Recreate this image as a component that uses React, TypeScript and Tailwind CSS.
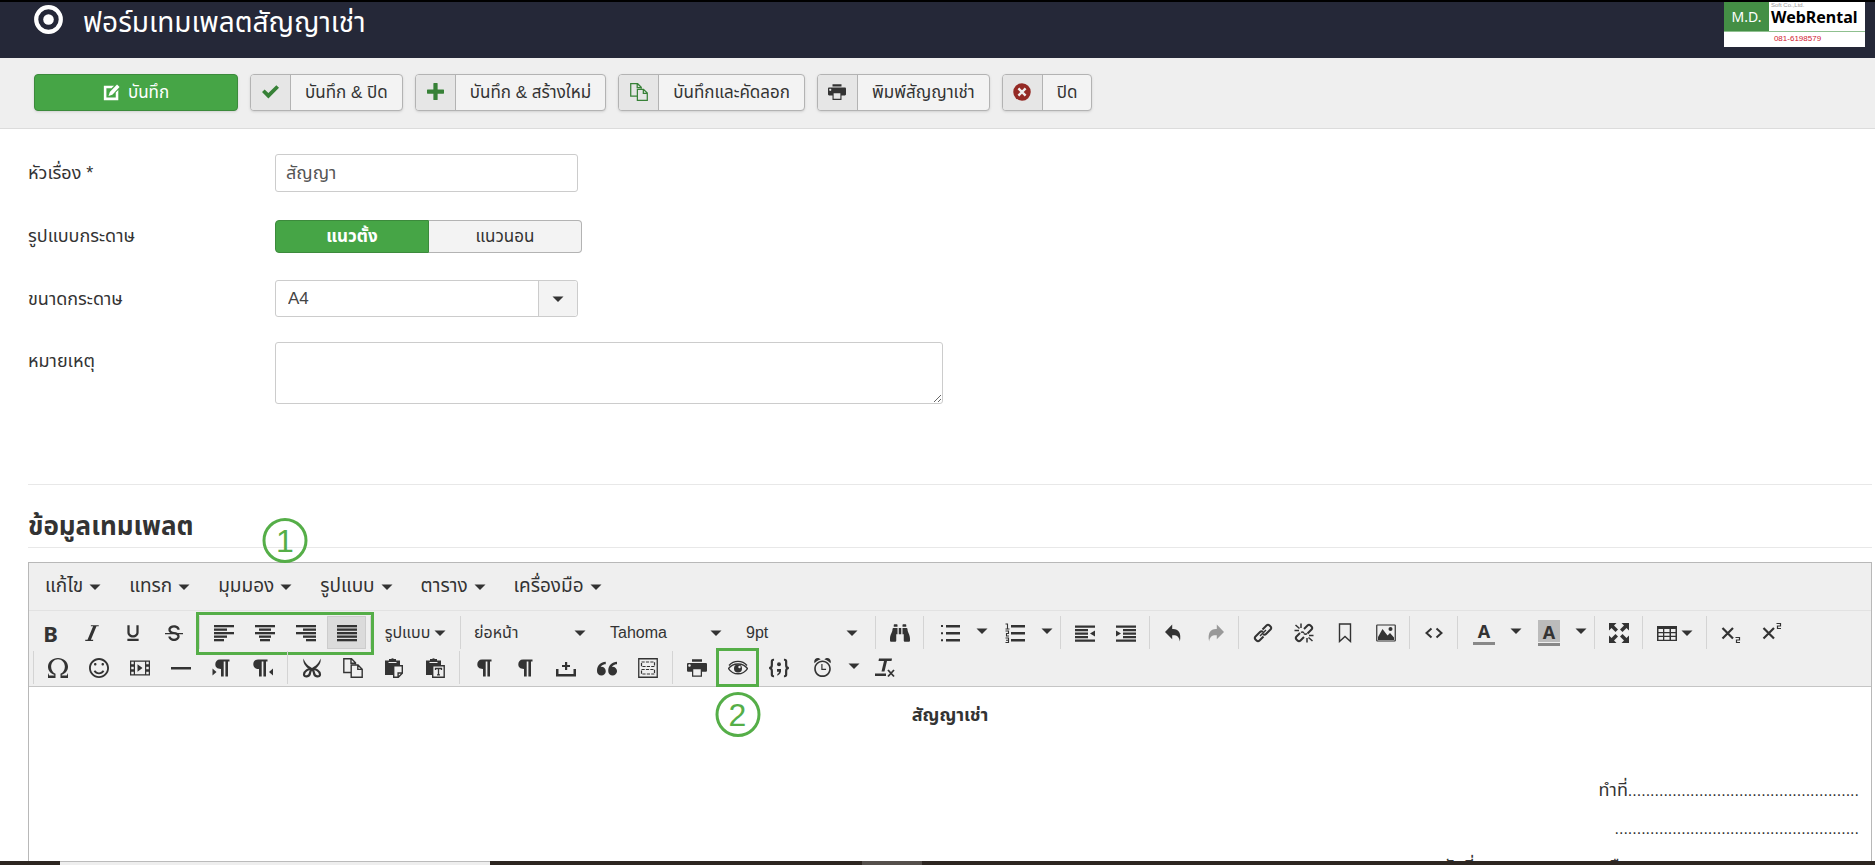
import type { ComponentProps, ReactNode } from 'react';
import {
  ImCheckmark,
  ImPlus,
  ImPrinter,
  ImItalic,
  ImUnderline,
  ImStrikethrough,
  ImOmega,
  ImSmile,
  ImFilm,
  ImQuotesLeft,
  ImAlarm,
} from 'react-icons/im';
import { FaBinoculars } from 'react-icons/fa';

const menus = ['แก้ไข', 'แทรก', 'มุมมอง', 'รูปแบบ', 'ตาราง', 'เครื่องมือ'];

const Svg = ({ children, className = 'size-5' }: { children: ReactNode; className?: string }) => (
  <svg viewBox="0 0 20 20" className={className} fill="currentColor" aria-hidden="true">
    {children}
  </svg>
);

const Caret = () => (
  <svg viewBox="0 0 12 6" className="w-3 h-1.5 shrink-0" fill="currentColor" aria-hidden="true">
    <path d="M0.500 0.500h11L6 6z" />
  </svg>
);

// Five horizontal strokes, given as [x, width] from top to bottom
const Lines = ({ rows }: { rows: number[][] }) => (
  <Svg>
    {rows.map(([x, w], i) => (
      <rect key={i} x={x} y={2 + i * 3.5} width={w} height="2.300" />
    ))}
  </Svg>
);

const alignments = [
  { label: 'ชิดซ้าย', rows: [[0, 20], [0, 13], [0, 20], [0, 13], [0, 10]] },
  { label: 'กึ่งกลาง', rows: [[0, 20], [4, 12], [0, 20], [4, 12], [5, 10]] },
  { label: 'ชิดขวา', rows: [[0, 20], [7, 13], [0, 20], [7, 13], [10, 10]] },
  { label: 'เต็มแนว', rows: [[0, 20], [0, 20], [0, 20], [0, 20], [0, 20]], active: true },
];

const TargetIcon = () => (
  <svg viewBox="0 0 29 29" className="size-[29px]" aria-hidden="true">
    <circle cx="14.500" cy="14.500" r="12.300" fill="none" stroke="currentColor" strokeWidth="4.200" />
    <circle cx="14.500" cy="14.500" r="5.300" fill="currentColor" />
  </svg>
);

const EditIcon = () => (
  <Svg className="size-[17px]">
    <path d="M1 2h12l-3 3H4v11h11v-6l3-3v12H1z" />
    <path d="M16.500 0.500l3 3-8.500 9-4.500 1.500 1.500-4.500z" />
  </Svg>
);

const CloseIcon = () => (
  <Svg className="size-[18px] text-[#942a25]">
    <circle cx="10" cy="10" r="9.700" />
    <path d="M6 6l8 8M14 6l-8 8" stroke="#efefef" strokeWidth="2.600" />
  </Svg>
);

const CopyIcon = ({ className = 'size-5' }: { className?: string }) => (
  <Svg className={className}>
    <g fill="none" stroke="currentColor" strokeWidth="1.400">
      <path d="M8 14.500H0.800V0.800h7.700l4 4V6.500M8 0.800V5.200h4.500" />
      <path d="M8.200 7h6.800l4.200 4.200v8H8.200zM14.800 7v4.400h4.400" />
    </g>
  </Svg>
);

const BulletIcon = () => (
  <Svg>
    <path d="M6 2h14v2.600H6zM6 9h14v2.600H6zM6 16h14v2.600H6zM1 2h2v2H1zM1 9.200h2v2H1zM1 16.300h2v2H1z" />
  </Svg>
);

const NumberIcon = () => (
  <Svg>
    <path d="M6 2h14v2.600H6zM6 9h14v2.600H6zM6 16h14v2.600H6z" />
    <path
      d="M0.500 1h2v5M0.500 6h4M0.500 8h3v2.500h-2V13H4M0.500 15h3v4.500h-3M1 17.200h2.500"
      fill="none"
      stroke="currentColor"
      strokeWidth="1.100"
    />
  </Svg>
);

const OutdentIcon = () => (
  <Svg>
    <path d="M0 2.500h20v2.200H0zM0 6h13v2.200H0zM0 9.500h13v2.200H0zM0 13h13v2.200H0zM0 16.500h20v2.200H0zM20 7.500v6l-5-3z" />
  </Svg>
);

const IndentIcon = () => (
  <Svg>
    <path d="M0 2.500h20v2.200H0zM7 6h13v2.200H7zM7 9.500h13v2.200H7zM7 13h13v2.200H7zM0 16.500h20v2.200H0zM0 7.500v6l5-3z" />
  </Svg>
);

const UndoIcon = () => (
  <Svg className="size-[18px]">
    <path d="M8 0.500v5C14.500 5 18.500 9 16.500 19.500 16 14 13 12 8 12.500V17L0 8.800z" />
  </Svg>
);

const RedoIcon = () => (
  <Svg className="size-[18px] text-[#999]">
    <path d="M12 0.500v5C5.500 5 1.500 9 3.500 19.500 4 14 7 12 12 12.500V17l8-8.200z" />
  </Svg>
);

const LinkIcon = () => (
  <Svg>
    <g fill="none" stroke="currentColor" strokeWidth="2" strokeLinejoin="round">
      <path d="M9.500 6.500l4-4q1.500-1.500 3 0l1 1q1.500 1.500 0 3l-4.500 4.500q-1.500 1.500-3 0" />
      <path d="M10.500 13.500l-4 4q-1.500 1.500-3 0l-1-1q-1.500-1.500 0-3L7 9q1.500-1.500 3 0" />
      <path d="M7 13l6-6" strokeWidth="1.500" />
    </g>
  </Svg>
);

const UnlinkIcon = () => (
  <Svg>
    <g fill="none" stroke="currentColor" strokeWidth="2" strokeLinejoin="round">
      <path d="M10 6l3.500-3.500q1.500-1.500 3 0l1 1q1.500 1.500 0 3l-4 4M10 14l-3.500 3.500q-1.500 1.500-3 0l-1-1q-1.500-1.500 0-3L6 10" />
      <path d="M10 10.500q1.500 1.500 3 0M7 9.500q1.500-1 3 0.500" strokeWidth="1.500" />
      <path d="M7 0.500v4.500M1.500 2l4 3.500M0.500 7.500H5M13 19.500V15M18.500 18l-4-3.500M19.500 12.500H15" strokeWidth="1.500" />
    </g>
  </Svg>
);

const BookmarkIcon = () => (
  <Svg>
    <path d="M4.500 1h11v17.500L10 13.500l-5.500 5z" fill="none" stroke="currentColor" strokeWidth="1.400" />
  </Svg>
);

const ImageIcon = () => (
  <Svg>
    <rect x="0.750" y="2" width="18.500" height="16" rx="0.500" fill="none" stroke="currentColor" strokeWidth="1.200" />
    <path d="M2 17v-3l4.500-8 5 6.500 2.500-2.500 4 4.500V17z" />
    <circle cx="14.500" cy="6" r="2" />
  </Svg>
);

const CodeIcon = () => (
  <Svg>
    <path d="M7.500 5.500L2.500 10l5 4.500M12.500 5.500l5 4.500-5 4.500" fill="none" stroke="currentColor" strokeWidth="2" />
  </Svg>
);

const FullscreenIcon = () => (
  <Svg>
    <path d="M0 0h7.500L5 2.500l4 4L6.500 9l-4-4L0 7.500zM20 0v7.500L17.500 5l-4 4L11 6.500l4-4L12.500 0zM0 20v-7.500L2.500 15l4-4L9 13.500l-4 4L7.500 20zM20 20h-7.500l2.500-2.500-4-4 2.500-2.500 4 4 2.500-2.500z" />
  </Svg>
);

const TableIcon = () => (
  <Svg>
    <path
      fillRule="evenodd"
      d="M0 3h20v15H0zM1.500 6v3H6V6zM7.300 6v3h5.200V6zM14 6v3h4.500V6zM1.500 10.200v2.600H6v-2.600zM7.300 10.200v2.600h5.200v-2.600zM14 10.200v2.600h4.500v-2.600zM1.500 14v2.700H6V14zM7.300 14v2.700h5.200V14zM14 14v2.700h4.500V14z"
    />
  </Svg>
);

const SubscriptIcon = () => (
  <Svg>
    <path d="M1.500 5l10.500 10.500M12 5L1.500 15.500" fill="none" stroke="currentColor" strokeWidth="2.200" />
    <path d="M14.500 14.500h4v2.500h-3v2.500h3.500" fill="none" stroke="currentColor" strokeWidth="1.200" />
  </Svg>
);

const SuperscriptIcon = () => (
  <Svg>
    <path d="M1.500 5l10.500 10.500M12 5L1.500 15.500" fill="none" stroke="currentColor" strokeWidth="2.200" />
    <path d="M14.500 0.500h4V3h-3v2.500h3.500" fill="none" stroke="currentColor" strokeWidth="1.200" />
  </Svg>
);

const ScissorsIcon = () => (
  <Svg>
    <path d="M1.500 0.500c1 3 3 6.500 8.500 9.500 5.500-3 7.500-6.500 8.500-9.500C19.500 4 17 8.500 12.500 11.500l-2.500 2-2.500-2C3 8.500 0.500 4 1.500 0.500z" />
    <g fill="none" stroke="currentColor" strokeWidth="2.200">
      <path d="M9 11.500c-2.500-1-7 1.500-7 5 0 3 5.500 2.500 6-1.500zM11 11.500c2.500-1 7 1.500 7 5 0 3-5.500 2.500-6-1.500z" />
    </g>
  </Svg>
);

const PasteIcon = () => (
  <Svg>
    <path d="M1 2.500h4V1h2a2 1.500 0 0 1 3 0h2v1.500h4V7H9v10H1z" />
    <path d="M4.500 4.500h8" stroke="#efefef" strokeWidth="1" />
    <path d="M9.700 7.700h8.600v7.500l-4 4H9.700zM18.300 15h-4.200v4.200" fill="#efefef" stroke="currentColor" strokeWidth="1.400" />
  </Svg>
);

const PasteTextIcon = () => (
  <Svg>
    <path d="M1 2.500h4V1h2a2 1.500 0 0 1 3 0h2v1.500h4V7H7v10H1z" />
    <path d="M4.500 4.500h8" stroke="#efefef" strokeWidth="1" />
    <path d="M7.700 7.700h11.500v11.500H7.700z" fill="#efefef" stroke="currentColor" strokeWidth="1.400" />
    <path fill="none" stroke="currentColor" strokeWidth="1.300" d="M10.500 12v-1.500h6V12M13.500 10.500v6M12 16.800h3" />
  </Svg>
);

const pilcrow = 'M8 1.500h9.500v2h-1.500v15h-2.600v-15h-1.700v15H9V11C5 11 3.300 9 3.300 6.300S5 1.500 8 1.500z';

const PilcrowIcon = () => (
  <Svg>
    <path d={pilcrow} />
  </Svg>
);

const LtrIcon = () => (
  <Svg>
    <path d={pilcrow} />
    <path d="M0.500 10.500l4 3.500-4 3.500z" />
  </Svg>
);

const RtlIcon = () => (
  <Svg>
    <path d={pilcrow} transform="translate(-3)" />
    <path d="M20 10.500l-4 3.500 4 3.500z" />
  </Svg>
);

const NonBreakingIcon = () => (
  <Svg>
    <path d="M0 11h2.500v5h15v-5H20v7.500H0zM9 4h2.200v3H14v2h-2.800v3H9V9H6V7h3z" />
  </Svg>
);

const TemplateIcon = () => (
  <Svg>
    <g fill="none" stroke="currentColor">
      <path d="M0.750 0.750h18.500v18.500H0.750z" strokeWidth="1.300" />
      <path d="M3.500 4h13v4.500h-13zM3.500 11.500h13V16h-13z" strokeDasharray="3.200 1.200" strokeWidth="1.200" />
    </g>
  </Svg>
);

const EyeIcon = () => (
  <Svg>
    <g fill="none" stroke="currentColor" strokeWidth="1.300">
      <path d="M0.500 10.500C5 4.500 15 4.500 19.500 10.500 15 17.500 5 17.500 0.500 10.500z" />
      <path d="M1 7.500C5.500 2 14.500 2 19 7.500" />
    </g>
    <circle cx="10" cy="10.500" r="4" />
    <circle cx="11.500" cy="9" r="1.200" fill="#efefef" />
  </Svg>
);

const CodeSampleIcon = () => (
  <Svg className="size-[22px]">
    <g fill="none" stroke="currentColor" strokeWidth="2">
      <path d="M5.500 2.500H5Q3.500 2.500 3.500 4v3.500Q3.500 10 1 10q2.500 0 2.500 2.500V16q0 1.500 1.500 1.500h.5M14.500 2.500h.5q1.500 0 1.500 1.500v3.500Q16.500 10 19 10q-2.500 0-2.500 2.500V16q0 1.500-1.500 1.500h-.5" />
    </g>
    <circle cx="10" cy="6.500" r="1.800" />
    <path d="M8.200 11h3.600c.5 3-.8 5-3.300 6v-1.500c1-.5 1.500-1.200 1.500-2H8.200z" />
  </Svg>
);

const ClearFormatIcon = () => (
  <Svg>
    <path d="M4 0.500h13l-.5 2.500h-4.500L9.500 13.500H6.500L9 3H3.500zM0 15.500h11V18H0z" />
    <path d="M13 12l6 6.500M19 12l-6 6.500" fill="none" stroke="currentColor" strokeWidth="1.800" />
  </Svg>
);

interface ActionProps {
  icon: ReactNode;
  children: ReactNode;
}

const ActionButton = ({ icon, children }: ActionProps) => (
  <button
    type="button"
    className="flex h-[37px] items-stretch overflow-hidden rounded border border-[#b3b3b3] bg-[#f3f3f3] text-[17px] text-[#333] shadow-sm"
  >
    <span className="flex w-10 items-center justify-center border-r border-[#b3b3b3] bg-[#e6e6e6] pb-0.5">{icon}</span>
    <span className="flex items-center px-3.5">{children}</span>
  </button>
);

const Tool = ({ active = false, className = 'w-[39px]', ...rest }: ComponentProps<'button'> & { active?: boolean }) => (
  <button
    type="button"
    className={`relative flex h-[33px] items-center justify-center border ${
      active ? 'border-[#ccc] bg-[#dbdbdb]' : 'border-transparent'
    } ${className}`}
    {...rest}
  />
);

const SplitTool = ({ label, children }: { label: string; children: ReactNode }) => (
  <div className="flex">
    <Tool className="w-11" aria-label={label}>
      {children}
    </Tool>
    <Tool className="w-[19px] pb-1" aria-label={`${label} ตัวเลือก`}>
      <Caret />
    </Tool>
  </div>
);

const Group = ({ children, first = false }: { children: ReactNode; first?: boolean }) => (
  <div className={`relative flex gap-0.5 ${first ? 'pr-1.5' : 'border-l border-[#d4d4d4] px-1'}`}>{children}</div>
);

const Dropdown = ({ children }: { children: ReactNode }) => (
  <Tool className="w-[134px] pl-2 pr-3">
    <span className="flex-1 text-left">{children}</span>
    <Caret />
  </Tool>
);

const Badge = ({ children, className }: { children: ReactNode; className: string }) => (
  <span
    className={`absolute left-1/2 z-10 flex size-[45px] -translate-x-1/2 items-center justify-center rounded-full border-[3px] border-[#55ae48] text-[32px] leading-none text-[#55ae48] ${className}`}
  >
    {children}
  </span>
);

const Header = () => (
  <header className="flex h-[58px] shrink-0 items-start justify-between border-t-2 border-black bg-[#252838] pl-[34px] pr-[10px] text-white">
    <div className="flex items-start gap-5 pt-[3px]">
      <TargetIcon />
      <h1 className="text-[28px] leading-[36px]">ฟอร์มเทมเพลตสัญญาเช่า</h1>
    </div>
    <div className="h-[45px] w-[141px] bg-white text-black">
      <div className="flex h-[30px] border-b border-[#8fc08f]">
        <span className="flex w-[45px] items-center justify-center bg-[#448f45] font-['Noto_Sans'] text-[14px] text-white">
          M.D.
        </span>
        <div className="flex flex-col pl-0.5">
          <span className="text-[6px] leading-[7px] text-[#999]">Soft Co.,Ltd.</span>
          <span className="font-['Noto_Sans'] text-[16px] leading-[16px] font-bold">WebRental</span>
        </div>
      </div>
      <p className="pl-1.5 text-center text-[8px] leading-[14px] text-[#d02030]">081-6198579</p>
    </div>
  </header>
);

const Toolbar = () => (
  <div className="flex h-[71px] shrink-0 items-start gap-3 border-b border-[#dcdcdc] bg-[#efefef] pl-[34px] pt-4">
    <button
      type="button"
      className="flex h-[37px] w-[204px] items-center justify-center gap-2 rounded border border-[#3c8a3c] bg-[#46a546] text-[17px] text-white shadow-sm"
    >
      <EditIcon />
      บันทึก
    </button>
    <ActionButton icon={<ImCheckmark className="size-[17px] text-[#378137]" />}>บันทึก &amp; ปิด</ActionButton>
    <ActionButton icon={<ImPlus className="size-[17px] text-[#378137]" />}>บันทึก &amp; สร้างใหม่</ActionButton>
    <ActionButton icon={<CopyIcon className="size-[18px] text-[#378137]" />}>บันทึกและคัดลอก</ActionButton>
    <ActionButton icon={<ImPrinter className="size-[18px]" />}>พิมพ์สัญญาเช่า</ActionButton>
    <ActionButton icon={<CloseIcon />}>ปิด</ActionButton>
  </div>
);

const labelStyle = 'w-[247px] shrink-0 text-[18px] leading-[38px]';

const TemplateForm = () => (
  <form className="flex flex-col pl-7 pt-[25px]">
    <div className="flex h-[66px] items-start">
      <label htmlFor="title" className={labelStyle}>
        หัวเรื่อง *
      </label>
      <input
        id="title"
        defaultValue="สัญญา"
        className="h-[38px] w-[303px] rounded-[3px] border border-[#ccc] px-2.5 text-[18px] text-[#555]"
      />
    </div>
    <div className="flex h-[60px] items-start">
      <span className="w-[247px] shrink-0 text-[18px] leading-[32px]">รูปแบบกระดาษ</span>
      <div className="flex h-[33px] w-[307px] text-[17px]">
        <button type="button" className="flex-1 rounded-l border border-[#3c8a3c] bg-[#46a546] font-bold text-white">
          แนวตั้ง
        </button>
        <button type="button" className="flex-1 rounded-r border border-l-0 border-[#b3b3b3] bg-[#f3f3f3]">
          แนวนอน
        </button>
      </div>
    </div>
    <div className="flex h-[62px] items-start">
      <label htmlFor="size" className={labelStyle}>
        ขนาดกระดาษ
      </label>
      <div className="relative h-[37px] w-[303px]">
        <select
          id="size"
          className="size-full appearance-none rounded-[3px] border border-[#ccc] bg-white px-3 text-[17px] text-[#444]"
        >
          <option>A4</option>
        </select>
        <span className="pointer-events-none absolute inset-y-px right-px flex w-[39px] items-center justify-center rounded-r-sm border-l border-[#ccc] bg-[#f3f3f3]">
          <Caret />
        </span>
      </div>
    </div>
    <div className="flex items-start">
      <label htmlFor="note" className={labelStyle}>
        หมายเหตุ
      </label>
      <textarea id="note" className="block h-[62px] w-[668px] rounded-[3px] border border-[#ccc]" />
    </div>
  </form>
);

const EditorToolbar = () => (
  <div className="border-b border-[#c5c5c5] bg-[#efefef] pb-0.5 pt-[5px] text-[16px]">
    <div className="flex pl-0.5">
      <Group first>
        <Tool aria-label="ตัวหนา">
          <span className="font-['Noto_Sans'] text-[22px] leading-none font-bold">B</span>
        </Tool>
        <Tool aria-label="ตัวเอียง">
          <ImItalic className="size-[18px]" />
        </Tool>
        <Tool aria-label="ขีดเส้นใต้">
          <ImUnderline className="size-[18px]" />
        </Tool>
        <Tool aria-label="ขีดฆ่า">
          <ImStrikethrough className="size-[18px]" />
        </Tool>
      </Group>
      <Group>
        {alignments.map(({ label, rows, active }) => (
          <Tool key={label} aria-label={label} active={active}>
            <Lines rows={rows} />
          </Tool>
        ))}
        <span className="pointer-events-none absolute -inset-x-1 -top-1 -bottom-1.5 border-[3px] border-[#55ae48]" />
        <Badge className="bottom-[86px]">1</Badge>
      </Group>
      <Group>
        <Tool className="w-[81px] gap-1">
          รูปแบบ
          <Caret />
        </Tool>
      </Group>
      <Group>
        <Dropdown>ย่อหน้า</Dropdown>
        <Dropdown>Tahoma</Dropdown>
        <Dropdown>9pt</Dropdown>
      </Group>
      <Group>
        <Tool aria-label="ค้นหาและแทนที่">
          <FaBinoculars className="size-5" />
        </Tool>
      </Group>
      <Group>
        <SplitTool label="รายการ">
          <BulletIcon />
        </SplitTool>
        <SplitTool label="ลำดับเลข">
          <NumberIcon />
        </SplitTool>
      </Group>
      <Group>
        <Tool aria-label="ลดการเยื้อง">
          <OutdentIcon />
        </Tool>
        <Tool aria-label="เพิ่มการเยื้อง">
          <IndentIcon />
        </Tool>
      </Group>
      <Group>
        <Tool aria-label="เลิกทำ">
          <UndoIcon />
        </Tool>
        <Tool aria-label="ทำซ้ำ" disabled>
          <RedoIcon />
        </Tool>
      </Group>
      <Group>
        <Tool aria-label="ลิงก์">
          <LinkIcon />
        </Tool>
        <Tool aria-label="ลบลิงก์">
          <UnlinkIcon />
        </Tool>
        <Tool aria-label="บุ๊กมาร์ก">
          <BookmarkIcon />
        </Tool>
        <Tool aria-label="รูปภาพ">
          <ImageIcon />
        </Tool>
      </Group>
      <Group>
        <Tool aria-label="ซอร์สโค้ด">
          <CodeIcon />
        </Tool>
      </Group>
      <Group>
        <SplitTool label="สีข้อความ">
          <span className="flex h-[25px] w-[22px] items-start justify-center border-b-[3px] border-[#888] font-['Noto_Sans'] text-[18px] leading-[22px] font-bold">
            A
          </span>
        </SplitTool>
        <SplitTool label="สีพื้นหลัง">
          <span className="flex flex-col gap-px">
            <span className="h-[22px] w-[22px] bg-[#bbb] font-['Noto_Sans'] text-[18px] leading-[24px] font-bold">A</span>
            <span className="h-[3px] bg-[#888]" />
          </span>
        </SplitTool>
      </Group>
      <Group>
        <Tool aria-label="เต็มจอ">
          <FullscreenIcon />
        </Tool>
      </Group>
      <Group>
        <Tool className="w-[55px] gap-1" aria-label="ตาราง">
          <TableIcon />
          <Caret />
        </Tool>
      </Group>
      <Group>
        <Tool aria-label="ตัวห้อย">
          <SubscriptIcon />
        </Tool>
        <Tool aria-label="ตัวยก">
          <SuperscriptIcon />
        </Tool>
      </Group>
    </div>

    <div className="mt-0.5 flex gap-px pl-1">
      <Group>
        <Tool aria-label="อักขระพิเศษ">
          <ImOmega className="size-5" />
        </Tool>
        <Tool aria-label="อีโมติคอน">
          <ImSmile className="size-5" />
        </Tool>
        <Tool aria-label="วิดีโอ">
          <ImFilm className="size-5" />
        </Tool>
        <Tool aria-label="เส้นแนวนอน">
          <Svg>
            <path d="M0 9h20v2.500H0z" />
          </Svg>
        </Tool>
        <Tool aria-label="ซ้ายไปขวา">
          <LtrIcon />
        </Tool>
        <Tool aria-label="ขวาไปซ้าย">
          <RtlIcon />
        </Tool>
      </Group>
      <Group>
        <Tool aria-label="ตัด">
          <ScissorsIcon />
        </Tool>
        <Tool aria-label="คัดลอก">
          <CopyIcon />
        </Tool>
        <Tool aria-label="วาง">
          <PasteIcon />
        </Tool>
        <Tool aria-label="วางเป็นข้อความ">
          <PasteTextIcon />
        </Tool>
      </Group>
      <Group>
        <Tool aria-label="แสดงอักขระ">
          <PilcrowIcon />
        </Tool>
        <Tool aria-label="แสดงบล็อก">
          <PilcrowIcon />
        </Tool>
        <Tool aria-label="ช่องว่าง">
          <NonBreakingIcon />
        </Tool>
        <Tool aria-label="อ้างอิง">
          <ImQuotesLeft className="size-5" />
        </Tool>
        <Tool aria-label="แม่แบบ">
          <TemplateIcon />
        </Tool>
      </Group>
      <Group>
        <Tool aria-label="พิมพ์">
          <ImPrinter className="size-5" />
        </Tool>
        <Tool aria-label="แสดงตัวอย่าง">
          <EyeIcon />
          <span className="pointer-events-none absolute -inset-x-[3px] -inset-y-1 border-[3px] border-[#55ae48]" />
          <Badge className="top-10">2</Badge>
        </Tool>
        <Tool aria-label="ตัวอย่างโค้ด">
          <CodeSampleIcon />
        </Tool>
        <SplitTool label="วันเวลา">
          <ImAlarm className="size-[19px]" />
        </SplitTool>
        <Tool aria-label="ล้างรูปแบบ">
          <ClearFormatIcon />
        </Tool>
      </Group>
    </div>
  </div>
);

const Editor = () => (
  <section className="flex min-h-0 flex-1 flex-col pl-7 pr-[3px] pt-20">
    <h2 className="mb-[14px] h-[64px] shrink-0 border-y border-[#e8e8e8] pt-5 text-[26px] leading-[42px] font-bold">
      ข้อมูลเทมเพลต
    </h2>
    <div className="flex min-h-0 flex-1 flex-col border border-b-0 border-[#b8b8b8]">
      <nav className="flex h-[48px] shrink-0 items-center gap-7 border-b border-[#e2e2e2] bg-[#efefef] pl-4 text-[19px]">
        {menus.map((menu) => (
          <button key={menu} type="button" className="flex items-center gap-1.5">
            {menu}
            <Caret />
          </button>
        ))}
      </nav>
      <EditorToolbar />
      <article className="min-h-0 flex-1 overflow-hidden px-3 pt-[9px] text-[16px] leading-[38px]">
        <h3 className="mb-[37px] text-center text-[18px] font-bold">สัญญาเช่า</h3>
        <p className="text-right">
          <span className="text-[18px]">ทำที่</span>....................................................
        </p>
        <p className="text-right">.......................................................</p>
        <p className="text-right">
          <span className="text-[18px]">วันที่</span>.............................
          <span className="text-[18px]">เดือน</span>.................................................
        </p>
      </article>
    </div>
  </section>
);

const App = () => {
  return (
    <div className="flex h-screen flex-col overflow-hidden bg-white font-['Liberation_Sans','Noto_Sans_Thai',sans-serif] text-[#333]">
      <Header />
      <Toolbar />
      <TemplateForm />
      <Editor />
      <footer className="flex h-1 shrink-0 bg-[#2d2621]">
        <span className="ml-[60px] w-[430px] border-t border-[#bbb] bg-[#eee]" />
        <span className="ml-[372px] w-[60px] bg-[#55504c]" />
      </footer>
    </div>
  );
};

export default App;
